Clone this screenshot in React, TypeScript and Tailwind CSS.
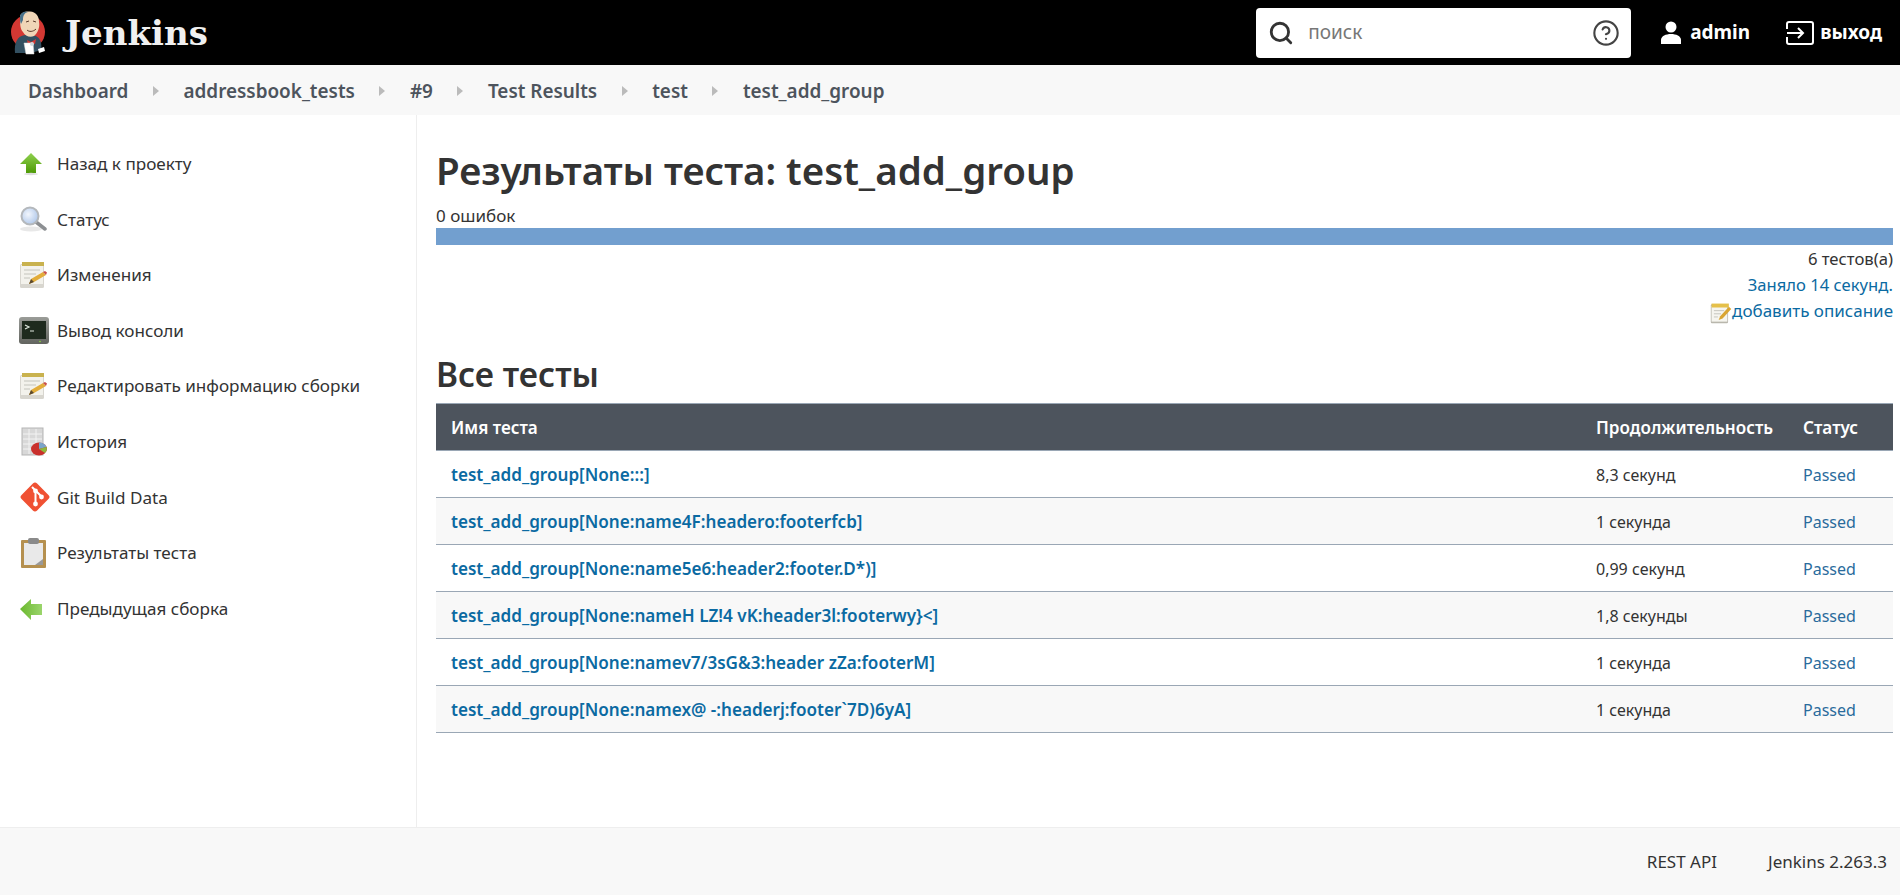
import { Search, CircleHelp } from "lucide-react";

const font = "font-['Noto_Sans','Liberation_Sans',sans-serif]";

function JenkinsLogo() {
    return (
        <svg width="36" height="44" viewBox="0 0 36 44" className="shrink-0">
            <circle cx="17" cy="21" r="17" fill="#d33833" />
            <path d="M4 42 C3 32 6 25 14 24 L25 25 C30 28 31 33 30 39 L20 42 Z" fill="#335061" />
            <path d="M9 6 C9 2 14 0 19 0.5 C25 1 28 5 28 11 C29 16 27 22 23 25 C19 27 14 25 12 21 C9 18 9 12 9 6 Z" fill="#f0d6b7" />
            <path d="M9 6 C9 2 13 0 17 1 C13 2 12 5 12 9 L10 13 C9 11 9 8 9 6 Z" fill="#49728b" />
            <path d="M15 11 L18 10 M22 10 L25 11 M16 19 C18 21 22 21 25 18" stroke="#5a3a2a" strokeWidth="1" fill="none" />
            <path d="M16 29 L20 31 L25 28 L24 33 L20 32 L17 34 Z" fill="#d33833" />
            <path d="M13 32 L22 32 L23 43 L15 43 Z" fill="#fff" stroke="#ddd" strokeWidth="0.5" />
            <path d="M27 38 L33 36 L34 40 L28 42 Z" fill="#fff" />
            <circle cx="21" cy="33" r="2" fill="#cfd8dc" />
        </svg>
    );
}

function ArrowUp() {
    return (
        <svg width="24" height="24" viewBox="0 0 24 24">
            <defs>
                <linearGradient id="gu" x1="0" y1="0" x2="0" y2="1">
                    <stop offset="0" stopColor="#8fd14f" />
                    <stop offset="1" stopColor="#4e9a06" />
                </linearGradient>
            </defs>
            <path d="M12 1 L23 12 L17 12 L17 21 L7 21 L7 12 L1 12 Z" fill="url(#gu)" />
            <ellipse cx="12" cy="22" rx="7" ry="1.2" fill="#ddd" />
        </svg>
    );
}

function ArrowLeft() {
    return (
        <svg width="24" height="24" viewBox="0 0 24 24">
            <defs>
                <linearGradient id="gl" x1="0" y1="0" x2="1" y2="0">
                    <stop offset="0" stopColor="#6ab82e" />
                    <stop offset="1" stopColor="#9bd56c" />
                </linearGradient>
            </defs>
            <path d="M1 12 L12 2 L12 7 L23 7 L23 18 L12 18 L12 23 Z" fill="url(#gl)" />
        </svg>
    );
}

function Magnifier() {
    return (
        <svg width="28" height="28" viewBox="0 0 28 28">
            <defs>
                <radialGradient id="mg" cx="0.4" cy="0.4" r="0.7">
                    <stop offset="0" stopColor="#f2f6fd" />
                    <stop offset="1" stopColor="#a9c3e8" />
                </radialGradient>
            </defs>
            <ellipse cx="12" cy="24" rx="11" ry="2.5" fill="#e8e8e8" />
            <path d="M17 17 L26 24" stroke="#8c8f92" strokeWidth="3.5" strokeLinecap="round" />
            <circle cx="11" cy="11" r="8.5" fill="url(#mg)" stroke="#b4b8bc" strokeWidth="2" />
        </svg>
    );
}

function Notepad() {
    return (
        <svg width="28" height="28" viewBox="0 0 28 28">
            <rect x="1" y="3" width="24" height="24" rx="1.5" fill="#d8d6cf" />
            <rect x="2" y="4" width="22" height="19" fill="#f3f2ec" />
            <rect x="3" y="1" width="22" height="4" fill="#c9b24e" />
            <path d="M5 9 H21 M5 13 H17 M5 17 H11" stroke="#c4c4bc" strokeWidth="1" />
            <path d="M10 23 L12 18 L24 11 L27 14 L15 21 Z" fill="#e3ad3a" />
            <path d="M24 11 L27 14 L28 11.5 L26 10 Z" fill="#c8504a" />
            <path d="M10 23 L12 18 L15 21 Z" fill="#5b4a30" />
        </svg>
    );
}

function Terminal() {
    return (
        <svg width="30" height="28" viewBox="0 0 30 28">
            <defs>
                <linearGradient id="tg" x1="0" y1="0" x2="0" y2="1">
                    <stop offset="0" stopColor="#9a9c98" />
                    <stop offset="1" stopColor="#62645f" />
                </linearGradient>
            </defs>
            <rect x="0" y="0" width="30" height="27" rx="3" fill="url(#tg)" />
            <rect x="3" y="4" width="24" height="18" fill="#1e2a1e" />
            <path d="M6 8 L10 10 L6 12 M11 14 H15" stroke="#dfe8df" strokeWidth="1.2" fill="none" />
            <circle cx="21" cy="24.5" r="0.8" fill="#8ae234" />
        </svg>
    );
}

function History() {
    return (
        <svg width="28" height="30" viewBox="0 0 28 30">
            <rect x="3" y="1" width="21" height="27" fill="#d8d8d8" stroke="#b5b5b5" />
            <path d="M4 7 H23 M4 12 H23 M4 17 H23 M4 22 H23 M10 2 V27 M17 2 V27" stroke="#f3f3f3" strokeWidth="1" />
            <ellipse cx="20" cy="22" rx="8" ry="6.5" fill="#c9302c" />
            <path d="M20 22 L20 15.5 A8 6.5 0 0 1 27.5 20 Z" fill="#7aa5c9" />
            <path d="M20 22 L27.5 20 A8 6.5 0 0 1 26 26 Z" fill="#8fb83c" />
        </svg>
    );
}

function GitIcon() {
    return (
        <svg width="32" height="32" viewBox="0 0 32 32">
            <rect x="5" y="5" width="22" height="22" rx="3" transform="rotate(45 16 16)" fill="#f05133" />
            <path d="M13 6 L16.5 9.5 M16.5 9.5 V23 M16.5 9.5 L22.5 15.5" stroke="#fff" strokeWidth="2" fill="none" />
            <circle cx="16.5" cy="10" r="2.4" fill="#fff" />
            <circle cx="16.5" cy="23" r="2.4" fill="#fff" />
            <circle cx="22.5" cy="16" r="2.4" fill="#fff" />
        </svg>
    );
}

function Clipboard() {
    return (
        <svg width="28" height="32" viewBox="0 0 28 32">
            <rect x="2" y="3" width="25" height="28" rx="1" fill="#b5904f" />
            <rect x="5" y="6" width="19" height="22" fill="#e9e9e9" />
            <path d="M16 28 L24 28 L24 22 Z" fill="#999" />
            <rect x="9" y="1" width="11" height="6" rx="2" fill="#8a8a8a" />
        </svg>
    );
}

function NotepadSmall() {
    return (
        <svg width="22" height="22" viewBox="0 0 28 28" className="shrink-0 mt-[4px]">
            <rect x="1" y="3" width="22" height="24" rx="1.5" fill="#b9b7ad" />
            <rect x="2" y="5" width="20" height="20" fill="#f6f5ef" />
            <rect x="2" y="2" width="22" height="5" fill="#e5c04a" />
            <path d="M5 11 H18 M5 15 H14 M5 19 H10" stroke="#c4c4bc" strokeWidth="1.2" />
            <path d="M11 23 L13 18 L24 6 L27 9 L16 21 Z" fill="#d9a533" />
        </svg>
    );
}

function PersonIcon() {
    return (
        <svg width="20" height="23" viewBox="0 0 20 23" fill="#fff" className="ml-[30px]">
            <circle cx="10" cy="6" r="5.5" />
            <path d="M0 23 V19 C0 15 5 13 10 13 C15 13 20 15 20 19 V23 Z" />
        </svg>
    );
}

const menu = [
    { label: "Назад к проекту", icon: <ArrowUp /> },
    { label: "Статус", icon: <Magnifier /> },
    { label: "Изменения", icon: <Notepad /> },
    { label: "Вывод консоли", icon: <Terminal /> },
    { label: "Редактировать информацию сборки", icon: <Notepad /> },
    { label: "История", icon: <History /> },
    { label: "Git Build Data", icon: <GitIcon /> },
    { label: "Результаты теста", icon: <Clipboard /> },
    { label: "Предыдущая сборка", icon: <ArrowLeft /> },
];

const crumbs = ["Dashboard", "addressbook_tests", "#9", "Test Results", "test", "test_add_group"];

const tests = [
    { name: "test_add_group[None:::]", time: "8,3 секунд" },
    { name: "test_add_group[None:name4F:headero:footerfcb]", time: "1 секунда" },
    { name: "test_add_group[None:name5e6:header2:footer.D*)]", time: "0,99 секунд" },
    { name: "test_add_group[None:nameH LZ!4 vK:header3l:footerwy}<]", time: "1,8 секунды" },
    { name: "test_add_group[None:namev7/3sG&3:header zZa:footerM]", time: "1 секунда" },
    { name: "test_add_group[None:namex@ -:headerj:footer`7D)6yA]", time: "1 секунда" },
];

export default function App() {
    return (
        <div className={`${font} flex flex-col h-[895px] overflow-hidden bg-white text-[#333]`}>
            {/* Header */}
            <header className="h-[65px] bg-black flex items-center shrink-0">
                <div className="flex items-center ml-[11px]">
                    <JenkinsLogo />
                    <span className="ml-[18px] font-['DejaVu_Serif',serif] font-bold text-[34px] text-[#f0f0f0] leading-none">Jenkins</span>
                </div>
                <div className="ml-auto flex items-center">
                    <div className="w-[375px] h-[50px] bg-white rounded-[4px] flex items-center pl-[12px] pr-[11px]">
                        <Search size={26} strokeWidth={2.6} className="text-[#333]" />
                        <span className="ml-[14px] text-[19px] text-[#777]">поиск</span>
                        <CircleHelp size={28} strokeWidth={1.8} className="ml-auto text-[#444]" />
                    </div>
                    <PersonIcon />
                    <span className="ml-[9px] text-[19px] font-bold text-white">admin</span>
                    <svg width="28" height="24" viewBox="0 0 28 24" fill="none" stroke="#fff" strokeWidth="2" className="ml-[36px]">
                        <path d="M1 8 V3 Q1 1 3 1 H25 Q27 1 27 3 V21 Q27 23 25 23 H3 Q1 23 1 21 V16" />
                        <path d="M1 12 H17 M12 7 L17 12 L12 17" />
                    </svg>
                    <span className="ml-[6px] mr-[18px] text-[19px] font-bold text-white">выход</span>
                </div>
            </header>

            {/* Breadcrumbs */}
            <nav className="h-[50px] bg-[#f8f8f8] flex items-center pl-[28px] pt-[2px] shrink-0">
                {crumbs.map((crumb, i) => (
                    <div key={crumb} className="flex items-center">
                        <span className="text-[18.9px] font-semibold text-[#4d545d]">{crumb}</span>
                        {i < crumbs.length - 1 && (
                            <span className="mx-[24.5px] w-0 h-0 border-y-[5px] border-y-transparent border-l-[6px] border-l-[#bbb]" />
                        )}
                    </div>
                ))}
            </nav>

            <div className="flex flex-1 min-h-0">
                {/* Sidebar */}
                <aside className="w-[417px] shrink-0 border-r border-[#eee] pt-[21px]">
                    {menu.map((item) => (
                        <div key={item.label} className="h-[55.6px] flex items-center">
                            <div className="w-[57px] pl-[19px] flex justify-start shrink-0">{item.icon}</div>
                            <span className="text-[17.1px] text-[#333]">{item.label}</span>
                        </div>
                    ))}
                </aside>

                {/* Main */}
                <main className="flex-1 pl-[19px] pr-[7px]">
                    <h1 className="text-[38.5px] font-semibold leading-[48px] mt-[31px] text-[#333]">Результаты теста: test_add_group</h1>
                    <div className="text-[17px] leading-[24px] mt-[10px]">0 ошибок</div>
                    <div className="h-[17px] bg-[#729fcf]" />
                    <div className="text-right text-[17px] leading-[26px] mt-[1px]">
                        <div className="text-[16.7px]">6 тестов(а)</div>
                        <div className="text-[16.6px] text-[#0b6aa2]">Заняло 14 секунд.</div>
                        <div className="flex justify-end items-center text-[#0b6aa2]">
                            <NotepadSmall />
                            <span>добавить описание</span>
                        </div>
                    </div>
                    <h2 className="text-[33.5px] font-semibold leading-[40px] mt-[30px] text-[#333]">Все тесты</h2>
                    <table className="w-full mt-[9px] border-collapse text-[17.1px]">
                        <thead>
                            <tr className="h-[47px] bg-[#4d545d] text-white border-y border-[#9aa7b5]">
                                <th className="pl-[15px] pt-[1px] text-left font-semibold">Имя теста</th>
                                <th className="w-[207px] pt-[1px] text-left font-semibold pl-0">Продолжительность</th>
                                <th className="w-[90px] pt-[1px] text-left font-semibold">Статус</th>
                            </tr>
                        </thead>
                        <tbody>
                            {tests.map((test, i) => (
                                <tr key={test.name} className={`h-[47px] border-b border-[#9aa7b5] ${i % 2 === 1 ? "bg-[#f8f8f8]" : "bg-white"}`}>
                                    <td className="pl-[15px] pt-[1px] font-semibold text-[#0b6aa2]">{test.name}</td>
                                    <td className="pt-[1px] text-[16px] text-[#333]">{test.time}</td>
                                    <td className="pt-[1px] text-[16px] text-[#2a6b9c]">Passed</td>
                                </tr>
                            ))}
                        </tbody>
                    </table>
                </main>
            </div>

            {/* Footer */}
            <footer className="h-[68px] shrink-0 bg-[#f8f8f8] border-t border-[#eee] flex items-center justify-end pr-[13px] text-[17px] text-[#333]">
                <span>REST API</span>
                <span className="ml-[51px]">Jenkins 2.263.3</span>
            </footer>
        </div>
    );
}
